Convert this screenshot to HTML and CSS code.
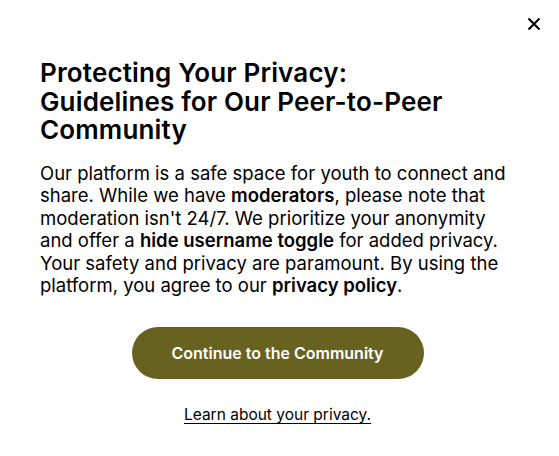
FILE: index.html
```html
<!DOCTYPE html>
<html lang="en">
<head>
<meta charset="utf-8">
<link rel="stylesheet" href="styles.css">
</head>
<body>
<div class="modal">
  <div class="modal-top">
    <button class="close" aria-label="Close">
      <svg width="14" height="14" viewBox="0 0 14 14"><path d="M1.5 1.5L12.5 12.5M12.5 1.5L1.5 12.5" stroke="#000" stroke-width="2" fill="none"/></svg>
    </button>
  </div>
  <div class="content">
    <h1 class="title">Protecting Your Privacy: Guidelines for Our Peer-to-Peer Community</h1>
    <p class="text">Our platform is a safe space for youth to connect and share. While we have <b>moderators</b>, please note that moderation isn't 24/7. We prioritize your anonymity and offer a <b>hide username toggle</b> for added privacy. Your safety and privacy are paramount. By using the platform, you agree to our <b>privacy policy</b>.</p>
    <div class="actions">
      <button class="cta">Continue to the Community</button>
      <a class="learn" href="#">Learn about your privacy.</a>
    </div>
  </div>
</div>
</body>
</html>
```

FILE: styles.css
```css
* { box-sizing: border-box; }
html, body { margin: 0; padding: 0; background: #fff; }
body { font-family: "Inter", "Liberation Sans", Arial, sans-serif; color: #000; }
.modal { width: 559px; height: 456px; padding: 14px 18px 0 40px; }
.modal-top { display: flex; justify-content: flex-end; height: 20px; }
.close { background: none; border: 0; padding: 0; width: 14px; height: 14px; margin-top: 3px; cursor: pointer; display: flex; }
.title { font-size: 26px; line-height: 28.5px; font-weight: 600; margin: 25px 0 0; width: 415px; letter-spacing: 0.15px; }
.text { font-size: 18.5px; line-height: 22.6px; margin: 17px 0 0; width: 472px; }
.text b { font-weight: 600; }
.actions { display: flex; flex-direction: column; align-items: center; margin-left: -40px; margin-right: -14px; }
.cta { margin-top: 30px; width: 292px; height: 52px; border: 0; border-radius: 26px; background: #67621f; color: #fff; font-family: inherit; font-size: 16px; font-weight: 600; }
.learn { margin-top: 26px; font-size: 15.5px; color: #000; text-decoration: underline; text-underline-offset: 3px; }
```
